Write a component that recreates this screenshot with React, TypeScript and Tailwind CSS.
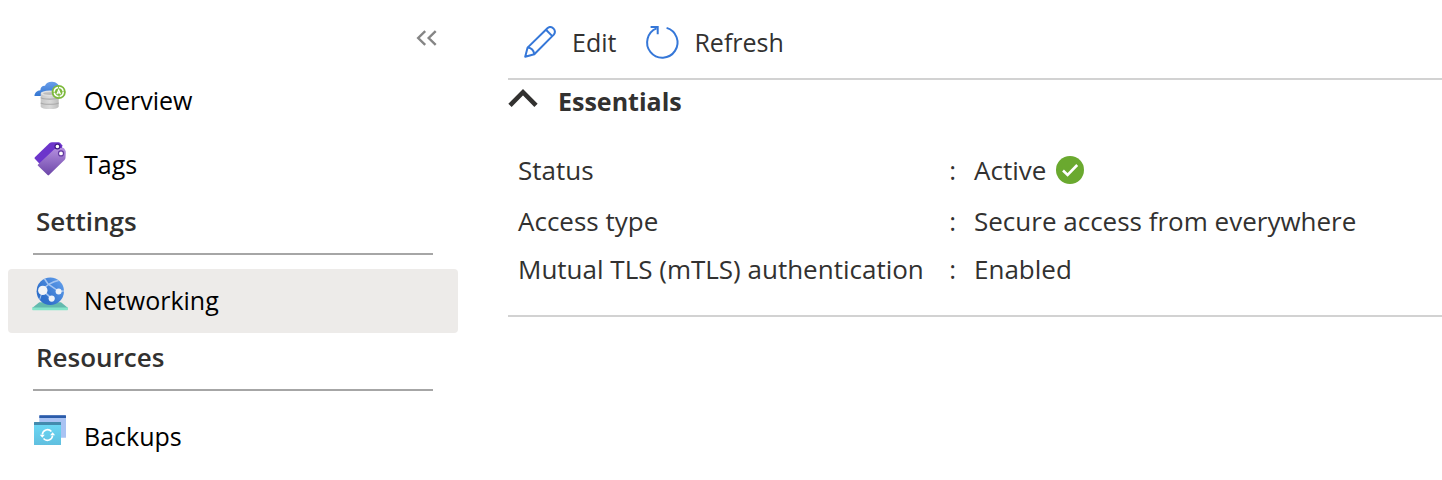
import type { ReactNode } from "react";

function OverviewIcon() {
  return (
    <svg viewBox="0 0 36 36" className="size-9 shrink-0" aria-hidden="true">
      <defs>
        <linearGradient id="cloud" x1="0" y1="0" x2="0" y2="1">
          <stop offset="0" stopColor="#6a9eea" />
          <stop offset="1" stopColor="#3376d2" />
        </linearGradient>
        <linearGradient id="disk" x1="0" y1="0" x2="1" y2="0">
          <stop offset="0" stopColor="#c6c6c6" />
          <stop offset="0.5" stopColor="#dadada" />
          <stop offset="1" stopColor="#bdbdbd" />
        </linearGradient>
      </defs>
      <path d="M2.5 19C2.4 16 5 13.4 8.4 13.2C8.3 10.4 10.3 8.5 13 8.7C14 6 17 4.6 20.2 4.8C24.5 5 27 7.6 27.6 11L29 19Z" fill="url(#cloud)" />
      <path d="M8.7 16.4V29.4C8.7 31 12.7 32.1 17.7 32.1S26.7 31 26.7 29.4V16.4Z" fill="url(#disk)" />
      <path d="M8.7 20.6C11 22.6 24.4 22.6 26.7 20.6M8.7 25.8C11 27.8 24.4 27.8 26.7 25.8" fill="none" stroke="#a9a9a9" strokeWidth="1.1" />
      <ellipse cx="17.7" cy="16.3" rx="9" ry="2.7" fill="#e0e0e0" />
      <ellipse cx="17.7" cy="16.6" rx="6.6" ry="1.4" fill="#bcbcbc" />
      <circle cx="26.7" cy="15" r="7.1" fill="#7db93c" />
      <circle cx="26.7" cy="15" r="4.5" fill="none" stroke="#fff" strokeWidth="1.5" strokeDasharray="6 1" />
      <path d="M24.9 17.2L26.7 12.8L28.5 17.2M25.5 15.9H27.9" fill="none" stroke="#fff" strokeWidth="1.1" />
    </svg>
  );
}

function TagsIcon() {
  return (
    <svg viewBox="0 0 36 36" className="size-9 shrink-0" aria-hidden="true">
      <defs>
        <linearGradient id="tag" x1="0" y1="0" x2="0" y2="1">
          <stop offset="0" stopColor="#b48fdf" />
          <stop offset="1" stopColor="#6c46a8" />
        </linearGradient>
      </defs>
      <path d="M2.8 17.7Q2.2 17 2.9 16.3L17.6 2.1Q18.6 1.2 20 1.2H26.6Q27.6 1.2 28.3 2L30.2 4.2V12L8 23.2Z" fill="#6c35cb" />
      <path d="M6 23.4L22 8.6Q23.4 7.2 25.4 7.2L30.8 6.8Q31.7 6.8 32.2 7.5L33.4 9.6Q33.8 10.3 33.8 11.2L33.5 16.8Q33.4 18 32.5 18.9L17 34.1Q16.3 34.8 15.6 34.1L6 24.8Q5.3 24.1 6 23.4Z" fill="url(#tag)" />
      <circle cx="25.4" cy="5.5" r="2.4" fill="#fff" stroke="#401c86" strokeWidth="1.2" />
      <circle cx="29" cy="12.4" r="2.5" fill="#fff" stroke="#62389f" strokeWidth="1.2" />
    </svg>
  );
}

function NetworkingIcon() {
  return (
    <svg viewBox="0 0 36 36" className="size-9 shrink-0 overflow-visible" aria-hidden="true">
      <defs>
        <linearGradient id="globe" x1="0" y1="1" x2="1" y2="0.2">
          <stop offset="0.3" stopColor="#2f70cb" />
          <stop offset="1" stopColor="#5f9cea" />
        </linearGradient>
        <clipPath id="globe-edge">
          <circle cx="18.3" cy="14.2" r="13.7" />
        </clipPath>
      </defs>
      <path d="M7.3 25.3H29L36 31H0.2Z" fill="#63b9ae" />
      <path d="M0.2 30.6H36V32.6Q36 33.3 35.3 33.3H0.9Q0.2 33.3 0.2 32.6Z" fill="#86e5ca" />
      <circle cx="18.3" cy="14.2" r="13.7" fill="url(#globe)" />
      <g clipPath="url(#globe-edge)" fill="none" stroke="#a5c5f1" strokeWidth="1.6">
        <path d="M10.7 13.3Q15 6 28 3" />
        <path d="M12 1L16 7L26.7 14.3L33 14" />
        <path d="M10.7 13.3L19.7 21.7" />
        <path d="M10.7 13.3L7.5 23" strokeWidth="1" />
      </g>
      <circle cx="10.8" cy="13.4" r="4.7" fill="#f2f4f7" />
      <circle cx="26.6" cy="14.4" r="3" fill="#edf2f9" />
      <circle cx="19.7" cy="21.6" r="3.1" fill="#edf2f9" />
    </svg>
  );
}

function BackupsIcon() {
  return (
    <svg viewBox="0 0 36 36" className="size-9 shrink-0" aria-hidden="true">
      <defs>
        <linearGradient id="pane" x1="0" y1="0" x2="0" y2="1">
          <stop offset="0" stopColor="#6cdaf7" />
          <stop offset="1" stopColor="#60bfdf" />
        </linearGradient>
      </defs>
      <rect x="7.3" y="2.2" width="26.7" height="22.6" rx="0.6" fill="#a9c3f3" />
      <path d="M7.3 5V2.7Q7.3 2.2 7.8 2.2H33.5Q34 2.2 34 2.7V5Z" fill="#2b5ba9" />
      <rect x="2" y="9" width="27" height="23" rx="0.6" fill="url(#pane)" />
      <path d="M2 12V9.500Q2 9 2.5 9H28.500Q29 9 29 9.500V12Z" fill="#438bae" />
      <path d="M10.3 21.5A5.2 5.2 0 0 1 19.4 18.5M20.6 22.5A5.2 5.2 0 0 1 11.5 25.5" fill="none" stroke="#fff" strokeWidth="1.6" />
      <path d="M7.8 21.7H12.8L10.3 24.8ZM18.1 22.3H23.1L20.6 19.2Z" fill="#fff" />
    </svg>
  );
}

function EditIcon() {
  return (
    <svg viewBox="0 0 32 32" className="size-8" fill="none" stroke="#3577d8" strokeWidth="2" strokeLinejoin="round" aria-hidden="true">
      <path d="M1.2 30.8L3.6 21.6L23.4 2.2Q26.3 -0.300 29.4 2.4Q32.2 5.4 29.8 8.6L10.3 28.3Z" />
      <path d="M22 3.8L28.3 10.1M3.6 21.6Q9.4 22.2 10.3 28.3" />
    </svg>
  );
}

function RefreshIcon() {
  return (
    <svg viewBox="0 0 32 32" className="size-8 overflow-visible" fill="none" stroke="#3577d8" strokeWidth="2" aria-hidden="true">
      <path d="M20.6 1.9A15.2 15.2 0 1 1 10.6 2.4" />
      <path d="M4.600 1H11.700V8.200" />
    </svg>
  );
}

function NavItem({ icon, label, selected = false }: { icon: ReactNode; label: string; selected?: boolean }) {
  return (
    <a
      href="#"
      aria-current={selected ? "page" : undefined}
      className={
        selected
          ? "flex h-16 items-start gap-4 rounded bg-[#edebe9] pt-2 pl-6"
          : "flex h-16 items-start gap-4 rounded pt-2 pl-6"
      }
    >
      {icon}
      <span className="pt-1 text-[25px] leading-[38px] text-black">{label}</span>
    </a>
  );
}

function NavHeading({ children }: { children: ReactNode }) {
  return (
    <h2 className="mx-[25px] mb-3.5 border-b-2 border-[#a6a6a6] px-[3px] pt-1 pb-3 text-[26px] leading-10 font-semibold text-[#323130]">
      {children}
    </h2>
  );
}

function Property({ label, children }: { label: string; children: ReactNode }) {
  return (
    <div className="flex h-12 items-center first:h-[54px]">
      <dt className="flex w-[456px] justify-between pr-[18px]">
        {label}
        <span>:</span>
      </dt>
      <dd className="flex items-center gap-2.5">{children}</dd>
    </div>
  );
}

export default function App() {
  return (
    <div className="flex bg-white font-['Open_Sans','Noto_Sans',sans-serif] text-[#323130]">
      <aside className="w-[458px] shrink-0 pl-2">
        <div className="flex h-[69px] justify-end pt-7 pr-5">
          <button type="button" aria-label="Collapse menu" className="h-5">
            <svg viewBox="0 0 22 20" className="h-5 w-5.5" fill="none" stroke="#858585" strokeWidth="2.400" aria-hidden="true">
              <path d="M9.2 3.2L2.2 10L9.2 16.8M19.7 3.2L12.7 10L19.7 16.8" />
            </svg>
          </button>
        </div>
        <nav>
          <NavItem icon={<OverviewIcon />} label="Overview" />
          <NavItem icon={<TagsIcon />} label="Tags" />
          <NavHeading>Settings</NavHeading>
          <NavItem icon={<NetworkingIcon />} label="Networking" selected />
          <NavHeading>Resources</NavHeading>
          <NavItem icon={<BackupsIcon />} label="Backups" />
        </nav>
      </aside>

      <main className="ml-12.5 min-w-0 grow text-[26px]">
        <div className="flex h-20 items-center gap-7.5 border-b-2 border-[#d2d2d2] pt-1.5 pl-4 text-[25px]">
          <button type="button" className="flex items-center gap-4">
            <EditIcon />
            <span className="pt-0.5">Edit</span>
          </button>
          <button type="button" className="flex items-center gap-4">
            <RefreshIcon />
            <span className="pt-0.5">Refresh</span>
          </button>
        </div>
        <section className="border-b-2 border-[#d2d2d2] pb-5.5">
          <h1>
            <button type="button" aria-expanded="true" className="flex h-11 items-center gap-5 text-[25px] font-bold">
              <svg viewBox="0 0 30 24" className="h-6 w-7.5 overflow-visible" fill="none" stroke="#323130" strokeWidth="4.6" aria-hidden="true">
                <path d="M2 15.4L15 2.2L28 15.4" />
              </svg>
              Essentials
            </button>
          </h1>
          <dl className="pt-[19px] pl-2.5">
            <Property label="Status">
              Active
              <svg viewBox="0 0 28 28" className="size-7" aria-hidden="true">
                <circle cx="14" cy="14" r="14" fill="#6aa92f" />
                <path d="M7 14.5L11.6 19L21.2 9" fill="none" stroke="#fff" strokeWidth="2.6" />
              </svg>
            </Property>
            <Property label="Access type">Secure access from everywhere</Property>
            <Property label="Mutual TLS (mTLS) authentication">Enabled</Property>
          </dl>
        </section>
      </main>
    </div>
  );
}
